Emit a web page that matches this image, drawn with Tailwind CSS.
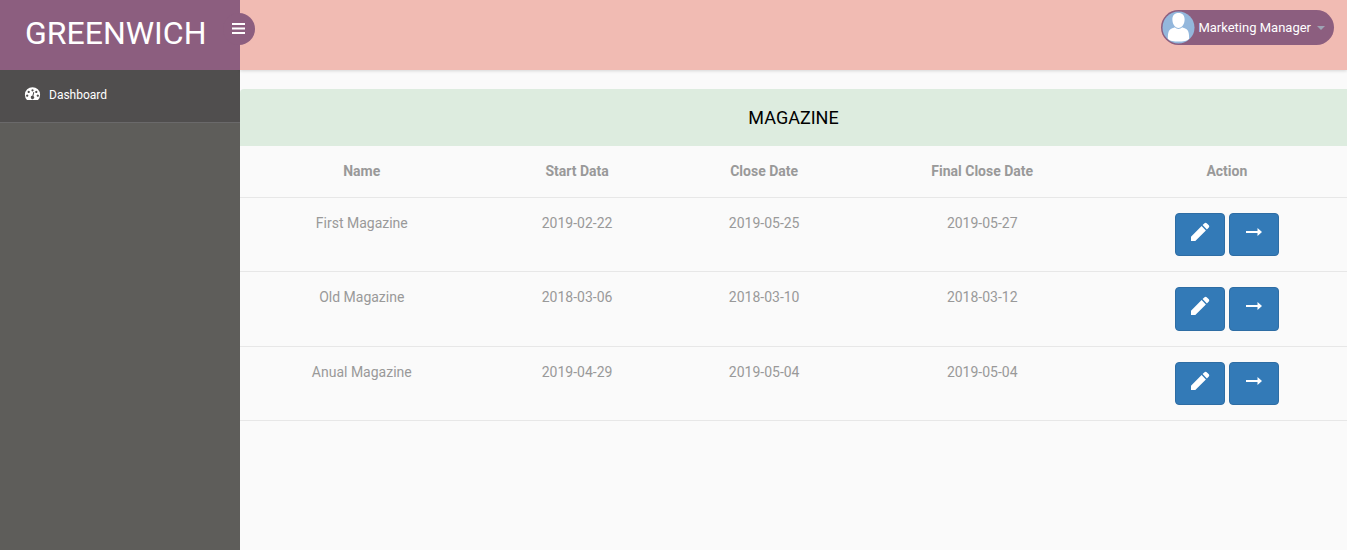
<!DOCTYPE html>
<html lang="en">
<head>
<meta charset="utf-8">
<title>Greenwich - Magazine</title>
<script src="https://cdn.jsdelivr.net/npm/@tailwindcss/browser@4"></script>
</head>
<body class="flex min-h-screen bg-[#fafafa] font-[Roboto,sans-serif] text-sm text-[#999]">
<svg class="hidden" aria-hidden="true">
  <symbol id="pencil" viewBox="0 0 20 20"><path d="M1 14.700V19h4.300L15.900 8.400l-4.300-4.300zM18.800 5.500a1.600 1.600 0 0 0 0-2.200L16.700 1.200a1.600 1.600 0 0 0-2.200 0L12.600 3.100l4.300 4.300z"/></symbol>
  <symbol id="arrow" viewBox="0 0 18 10"><path d="M1 4h11.500V1L17 5l-4.500 4V6H1z"/></symbol>
</svg>
<aside class="flex w-60 shrink-0 flex-col bg-[#5e5d5a]">
  <div class="relative flex h-[70px] items-start bg-[#8c5e7f] pt-2 pl-[25px]">
    <a href="#" class="text-[32px] leading-[50px] text-white">GREENWICH</a>
    <button type="button" aria-label="Toggle menu" class="absolute top-[13px] -right-[15px] z-10 flex size-8 items-center justify-center rounded-full bg-[#8c5e7f] pr-0.5 pb-0.5 text-white">
      <svg class="h-[11px] w-[13px]" viewBox="0 0 13 11" fill="currentColor"><path d="M0 0h13v2H0zM0 4.500h13v2H0zM0 9h13v2H0z"/></svg>
    </button>
  </div>
  <nav>
    <a href="#" class="flex h-[53px] items-center gap-2 border-b border-[#6a696a] bg-[#504e4e] pb-0.5 pl-6 text-xs text-white">
      <svg class="h-4 w-[17px]" viewBox="0 1 17 16" fill="currentColor" fill-rule="evenodd"><path d="M3 14A7.600 7.600 0 1 1 14 14zM3.200 8.500a1.100 1.100 0 1 0 .01 0zM4.700 4.800a1.100 1.100 0 1 0 .01 0zM8.500 3.200a1.100 1.100 0 1 0 .01 0zM12.300 4.800a1.100 1.100 0 1 0 .01 0zM13.800 8.500a1.100 1.100 0 1 0 .01 0zM9.300 6l-.9 3.800a1.600 1.600 0 1 0 1 .3l.9-3.800z"/></svg>
      Dashboard
    </a>
  </nav>
</aside>
<div class="flex min-w-0 flex-1 flex-col">
  <header class="flex h-[70px] items-start justify-end bg-[#f1bbb3] pt-2.5 pr-[13px] shadow-[0_1px_3px_rgba(0,0,0,0.15)]">
    <button type="button" class="flex h-[35px] items-center rounded-full bg-[#8c5e7f] pr-[9px] pl-px text-[13px] text-white">
      <svg class="mr-[3px] size-[33px]" viewBox="0 0 34 34"><defs><clipPath id="face"><circle cx="17" cy="17" r="16"/></clipPath></defs><circle cx="17" cy="17" r="16.500" fill="#93b7dc"/><g clip-path="url(#face)" fill="#fff"><path d="M17 2c4 0 6.500 2.700 6.300 7-.1 4.500-2.800 8.500-6.300 8.500S10.800 13.500 10.700 9C10.500 4.700 13 2 17 2z"/><path d="M6 29.500c0-6 .5-9.500 3-11 1.500-.9 3-1 4.300-1.800 2 2.300 5.400 2.300 7.400 0 1.300.8 2.800.9 4.300 1.800 2.500 1.500 3 5 3 11C24.500 32 9.500 32 6 29.500z"/></g></svg>
      <span class="pt-px">Marketing Manager</span>
      <svg class="ml-1.5 h-1 w-2" viewBox="0 0 8 4"><path d="M0 0h8L4 4z" fill="#9ea3b4"/></svg>
    </button>
  </header>
  <main class="pt-[19px]">
    <h1 class="rounded-tl-sm bg-[#ddecdf] py-4 text-center text-lg leading-[25px] text-black">MAGAZINE</h1>
    <table class="w-full table-fixed border-collapse text-center">
      <colgroup><col class="w-[22%]"><col class="w-[16.9%]"><col class="w-[16.9%]"><col class="w-[22.5%]"><col class="w-[21.7%]"></colgroup>
      <thead>
        <tr class="h-[51px] border-b border-[#e7e7e7]"><th scope="col">Name</th><th scope="col">Start Data</th><th scope="col">Close Date</th><th scope="col">Final Close Date</th><th scope="col">Action</th></tr>
      </thead>
      <tbody class="align-top">
        <tr class="border-b border-[#e7e7e7]">
          <td class="pt-[15px]">First Magazine</td><td class="pt-[15px]">2019-02-22</td><td class="pt-[15px]">2019-05-25</td><td class="pt-[15px]">2019-05-27</td>
          <td class="py-[15px]"><div class="flex justify-center gap-1">
            <button type="button" aria-label="Edit" class="flex h-[43px] w-[50px] justify-center rounded border border-[#2e6da4] bg-[#337ab7] pt-2 text-white"><svg class="size-5" fill="currentColor"><use href="#pencil"/></svg></button>
            <button type="button" aria-label="Open" class="flex h-[43px] w-[50px] justify-center rounded border border-[#2e6da4] bg-[#337ab7] pt-[13px] text-white"><svg class="h-2.5 w-[18px]" fill="currentColor"><use href="#arrow"/></svg></button>
          </div></td>
        </tr>
        <tr class="border-b border-[#e7e7e7]">
          <td class="pt-[15px]">Old Magazine</td><td class="pt-[15px]">2018-03-06</td><td class="pt-[15px]">2018-03-10</td><td class="pt-[15px]">2018-03-12</td>
          <td class="py-[15px]"><div class="flex justify-center gap-1">
            <button type="button" aria-label="Edit" class="flex h-11 w-[50px] justify-center rounded border border-[#2e6da4] bg-[#337ab7] pt-2 text-white"><svg class="size-5" fill="currentColor"><use href="#pencil"/></svg></button>
            <button type="button" aria-label="Open" class="flex h-11 w-[50px] justify-center rounded border border-[#2e6da4] bg-[#337ab7] pt-[13px] text-white"><svg class="h-2.5 w-[18px]" fill="currentColor"><use href="#arrow"/></svg></button>
          </div></td>
        </tr>
        <tr class="border-b border-[#e7e7e7]">
          <td class="pt-[15px]">Anual Magazine</td><td class="pt-[15px]">2019-04-29</td><td class="pt-[15px]">2019-05-04</td><td class="pt-[15px]">2019-05-04</td>
          <td class="py-[15px]"><div class="flex justify-center gap-1">
            <button type="button" aria-label="Edit" class="flex h-[43px] w-[50px] justify-center rounded border border-[#2e6da4] bg-[#337ab7] pt-2 text-white"><svg class="size-5" fill="currentColor"><use href="#pencil"/></svg></button>
            <button type="button" aria-label="Open" class="flex h-[43px] w-[50px] justify-center rounded border border-[#2e6da4] bg-[#337ab7] pt-[13px] text-white"><svg class="h-2.5 w-[18px]" fill="currentColor"><use href="#arrow"/></svg></button>
          </div></td>
        </tr>
      </tbody>
    </table>
  </main>
</div>
</body>
</html>
